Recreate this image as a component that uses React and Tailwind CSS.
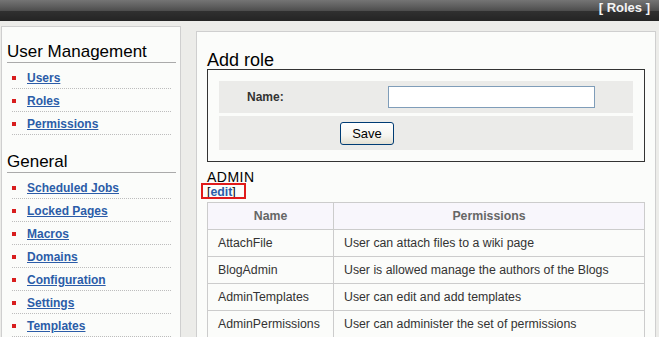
export default function App() {
  const links1 = ["Users", "Roles", "Permissions"];
  const links2 = [
    "Scheduled Jobs",
    "Locked Pages",
    "Macros",
    "Domains",
    "Configuration",
    "Settings",
    "Templates",
  ];
  const rows = [
    ["AttachFile", "User can attach files to a wiki page"],
    ["BlogAdmin", "User is allowed manage the authors of the Blogs"],
    ["AdminTemplates", "User can edit and add templates"],
    ["AdminPermissions", "User can administer the set of permissions"],
  ];

  const Section = ({ title, items, extra }) => (
    <div className={extra}>
      <h2 className="ml-[5px] mr-[4px] border-b border-[#aaaaaa] text-[17px] leading-[21px] font-normal text-black">
        {title}
      </h2>
      <ul className="ml-[10px] mr-[9px] mt-[3px]">
        {items.map((t) => (
          <li
            key={t}
            className="flex h-[23px] items-center border-b border-dotted border-[#bdbdbd] pt-[2px]"
          >
            <span className="h-[4px] w-[4px] bg-[#d81e1e]" />
            <a
              href="#"
              className="ml-[11px] text-[12px] font-bold leading-[14px] text-[#2b5ca8] underline"
            >
              {t}
            </a>
          </li>
        ))}
      </ul>
    </div>
  );

  return (
    <div className="h-[337px] overflow-hidden bg-[#ecece9] font-['Liberation_Sans',Arial,sans-serif]">
      <div className="flex h-[21px] justify-end bg-[linear-gradient(to_bottom,#747474_0%,#5e5e5e_30%,#4e4e4e_50%,#303030_53%,#242424_100%)] pr-[9px]">
        <span className="text-[13px] font-bold leading-[16px] text-[#f4f4f4]">
          [ Roles ]
        </span>
      </div>
      <div className="flex items-start">
        <aside className="ml-[1px] mt-[5px] w-[180px] shrink-0 border border-[#cfcfcf] bg-[#fbfcfa] pb-4 pt-[14px]">
          <Section title="User Management" items={links1} />
          <Section title="General" items={links2} extra="mt-[16px]" />
        </aside>
        <main className="ml-[15px] mr-[3px] mt-[10px] flex-1 border border-[#cfcfcf] bg-[#fbfcfa] px-[10px] pb-4 pt-[16px]">
          <h1 className="h-[21px] text-[18px] font-normal leading-[24px] text-black">
            Add role
          </h1>
          <div className="flex flex-col gap-[3px] border border-[#333333] p-[11px]">
            <div className="flex h-[32px] items-center bg-[#ebebe9]">
              <div className="w-[169px] pl-[28px] text-[12px] font-bold text-[#333333]">
                Name:
              </div>
              <input
                type="text"
                className="h-[22px] w-[207px] border border-[#7f9db9] bg-white outline-none"
              />
            </div>
            <div className="flex h-[34px] items-center bg-[#ebebe9] pl-[121px]">
              <button className="h-[23px] w-[54px] rounded-[3px] border border-[#003c74] bg-[linear-gradient(to_bottom,#ffffff_0%,#f6f5f0_60%,#e3e0d2_100%)] text-[13px] leading-[15px] text-black">
                Save
              </button>
            </div>
          </div>
          <div className="mt-[6px] h-[17px] text-[14px] leading-[19px] tracking-[0.5px] text-black">
            ADMIN
          </div>
          <div className="relative text-[12.3px] leading-[14px] text-black">
            [<a href="#" className="font-bold text-[#2b5ca8] underline">edit</a>]
            <span className="absolute left-[-6px] top-[-2px] h-[16px] w-[45px] border-2 border-[#e01b1b]" />
          </div>
          <table className="mt-[3px] w-full border-collapse text-[12.3px]">
            <thead>
              <tr className="bg-[#f8f6fc]">
                <th className="h-[27px] w-[126px] border border-[#cccccc] pt-[1px] text-center font-bold text-[#666666]">
                  Name
                </th>
                <th className="h-[27px] border border-[#cccccc] pt-[1px] text-center font-bold text-[#666666]">
                  Permissions
                </th>
              </tr>
            </thead>
            <tbody>
              {rows.map(([n, p]) => (
                <tr key={n}>
                  <td className="h-[27px] border border-[#cccccc] pl-[10px] pt-[1px] text-[#333333]">
                    {n}
                  </td>
                  <td className="h-[27px] border border-[#cccccc] pl-[10px] pt-[1px] text-[#333333]">
                    {p}
                  </td>
                </tr>
              ))}
            </tbody>
          </table>
        </main>
      </div>
    </div>
  );
}
